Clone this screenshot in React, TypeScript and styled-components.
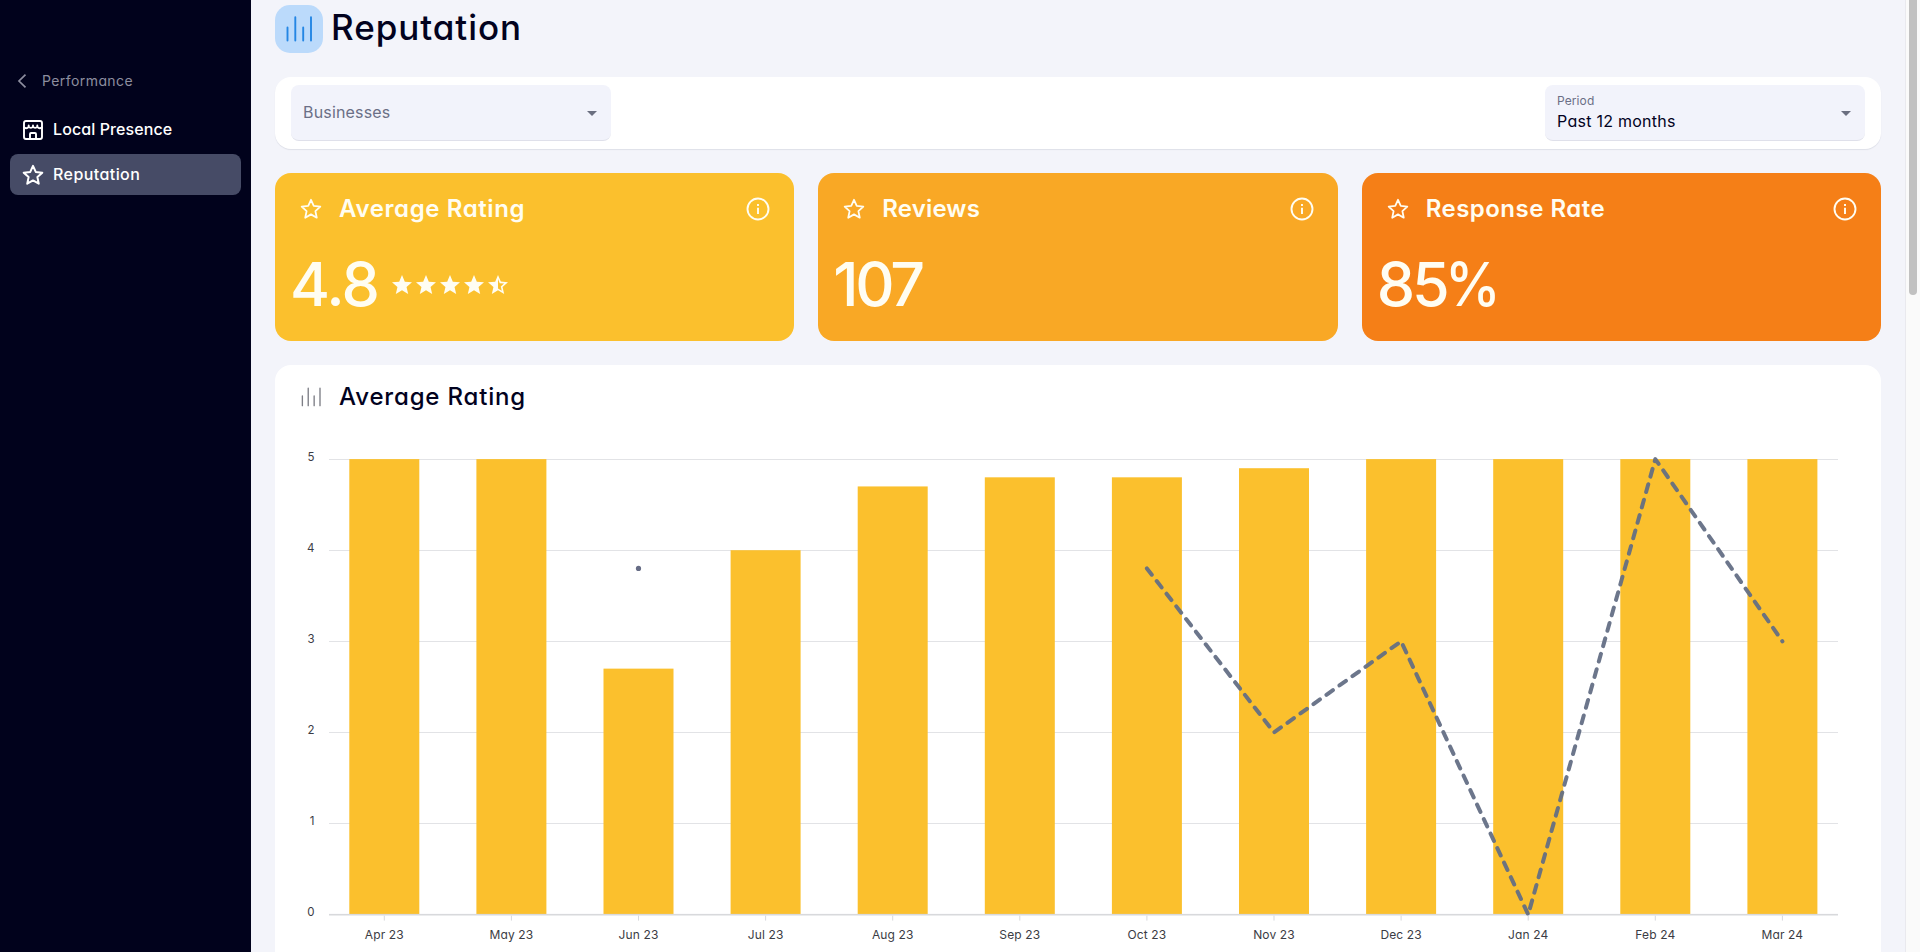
import React from "react";
import styled, { createGlobalStyle } from "styled-components";

const GlobalStyle = createGlobalStyle`
  *, *::before, *::after { box-sizing: border-box; }
  html, body { margin: 0; height: 100%; overflow: hidden; }
  body {
    font-family: Inter, "Open Sans", sans-serif;
    font-feature-settings: "cv11" 1;
    color: #02021e;
    background: #f3f4fa;
  }
  svg { display: block; flex: none; }
`;

const Shell = styled.div`
  display: flex;
  height: 100vh;
  overflow: hidden;
`;

const Sidebar = styled.nav`
  flex: none;
  width: 251px;
  padding: 69px 10px 0;
  background: #01021c;
  color: #fff;
`;

const BackLink = styled.div`
  display: flex;
  align-items: center;
  gap: 12px;
  height: 24px;
  margin-bottom: 16px;
  color: #8d8e9f;
  font-size: 14px;
  letter-spacing: 0.42px;
`;

const NavItem = styled.div<{ $active?: boolean }>`
  display: flex;
  align-items: center;
  gap: 8px;
  height: 41px;
  margin-bottom: 4px;
  padding-left: 11px;
  border-radius: 8px;
  background: ${(p) => (p.$active ? "#464b66" : "transparent")};
  font-size: 16px;
  font-weight: 500;
`;

const NavText = styled.span<{ $spacing?: number }>`
  padding-bottom: 2px;
  letter-spacing: ${(p) => p.$spacing ?? 0}px;
`;

const Main = styled.main`
  flex: 1;
  min-width: 0;
  padding: 5px 24px 0;
  display: flex;
  flex-direction: column;
  gap: 24px;
`;

const PageHeader = styled.header`
  display: flex;
  gap: 8px;
  height: 48px;
`;

const HeaderIcon = styled.div`
  width: 48px;
  height: 48px;
  display: grid;
  place-items: center;
  border-radius: 15px;
  background: #bbdafb;
  color: #2486e4;
`;

const PageTitle = styled.h1`
  margin: 0;
  font-size: 35px;
  line-height: 45px;
  font-weight: 500;
  letter-spacing: 0.95px;
`;

const FilterBar = styled.section`
  flex: none;
  display: flex;
  justify-content: space-between;
  height: 72px;
  padding: 8px 16px;
  border-radius: 16px;
  background: #fff;
  box-shadow: 0 1px 1px rgba(40, 45, 80, 0.1);
`;

const Select = styled.div`
  display: flex;
  align-items: center;
  justify-content: space-between;
  width: 320px;
  height: 56px;
  padding: 0 7px 0 12px;
  border-radius: 8px;
  border-bottom: 1px solid #dfe0ea;
  background: #f2f3fb;
  color: #6b6f86;
  font-size: 16px;
`;

const SelectText = styled.div`
  display: flex;
  flex-direction: column;
`;

const Placeholder = styled.span`
  padding-bottom: 2px;
  letter-spacing: 0.18px;
`;

const SelectLabel = styled.span`
  font-size: 12px;
  line-height: 16px;
  letter-spacing: 0.1px;
`;

const SelectValue = styled.span`
  color: #02021e;
  line-height: 24px;
  letter-spacing: 0.26px;
`;

const CardRow = styled.section`
  flex: none;
  display: grid;
  grid-template-columns: repeat(3, 1fr);
  gap: 24px;
`;

const StatCard = styled.article<{ $color: string }>`
  height: 168px;
  padding: 16px;
  border-radius: 16px;
  background: ${(p) => p.$color};
  color: #fffdf2;
`;

const CardHead = styled.div`
  display: flex;
  align-items: center;
  height: 40px;
  padding: 0 8px;
`;

const CardTitle = styled.h2<{ $spacing: number }>`
  flex: 1;
  margin: 0 0 0 16px;
  font-size: 24px;
  line-height: 40px;
  font-weight: 500;
  letter-spacing: ${(p) => p.$spacing}px;
`;

const StatTitle = styled(CardTitle)`
  font-weight: 600;
`;

const CardBody = styled.div`
  display: flex;
  align-items: center;
  gap: 12px;
  height: 96px;
  padding-top: 16px;
`;

const Figure = styled.span<{ $spacing: number }>`
  margin-left: -1px;
  padding-bottom: 3px;
  font-size: 61px;
  font-weight: 500;
  line-height: 80px;
  letter-spacing: ${(p) => p.$spacing}px;
`;

const Percent = styled.span`
  display: inline-block;
  margin-left: -2px;
  transform: scaleX(0.92);
  transform-origin: left;
`;

const Stars = styled.div`
  display: flex;
`;

const ChartCard = styled.section`
  flex: none;
  height: 640px;
  padding: 12px 24px 0;
  border-radius: 16px;
  background: #fff;
`;

const ChartHead = styled.div`
  display: flex;
  align-items: center;
  height: 40px;
`;

const MutedIcon = styled.span`
  color: #7d7e86;
`;

const Chart = styled.svg`
  margin: 23px 0 0 -24px;
  font-size: 11.5px;
  fill: #3b3c44;
`;

const ScrollTrack = styled.div`
  flex: none;
  width: 15px;
  padding-left: 3px;
  border-left: 1px solid #e9e9ee;
  background: #fafafa;
`;

const ScrollThumb = styled.div`
  width: 8px;
  height: 295px;
  border-radius: 0 0 4px 4px;
  background: #c1c1c1;
`;

const ChevronLeft = () => (
  <svg width="20" height="20" viewBox="0 0 20 20" fill="none" stroke="currentColor" strokeWidth="1.7">
    <path d="M15.500 3.700 9 10l6.500 6.300" />
  </svg>
);

const StoreIcon = () => (
  <svg width="24" height="24" viewBox="0 0 24 24" fill="none" stroke="currentColor" strokeWidth="1.9" strokeLinecap="round" strokeLinejoin="round">
    <rect x="3" y="3" width="18" height="18" rx="2" />
    <path d="M3 9.400c1.800 1.200 3.600.8 4.700-.6 1 1.400 3.300 1.400 4.300 0 1 1.400 3.300 1.400 4.300 0 1.100 1.400 2.900 1.800 4.700.6M7.700 7.400v1.400M12 7.400v1.400M16.300 7.400v1.400M9 21v-5a1 1 0 0 1 1-1h4a1 1 0 0 1 1 1v5" />
  </svg>
);

const StarOutline = ({ weight = 2 }: { weight?: number }) => (
  <svg width="24" height="24" viewBox="0 0 24 24" fill="none" stroke="currentColor" strokeWidth={weight} strokeLinejoin="round">
    <path d="m12 2.800 2.750 6.150 6.550.7-4.900 4.450 1.350 6.600L12 17.400 6.250 20.700 7.600 14.100 2.700 9.650l6.550-.7z" />
  </svg>
);

const InfoIcon = () => (
  <svg width="24" height="24" viewBox="0 0 24 24" fill="none" stroke="currentColor" strokeWidth="1.900">
    <circle cx="12" cy="12" r="10.500" />
    <path d="M12 10.800v6.200M12 7v2" />
  </svg>
);

const StarFull = () => (
  <svg width="24" height="24" viewBox="0 0 24 24" fill="currentColor">
    <path d="M12 17.270 18.180 21l-1.640-7.030L22 9.240l-7.190-.61L12 2 9.190 8.630 2 9.240l5.460 4.730L5.820 21z" />
  </svg>
);

const StarHalf = () => (
  <svg width="24" height="24" viewBox="0 0 24 24" fill="currentColor">
    <path d="M22 9.240l-7.190-.62L12 2 9.190 8.630 2 9.240l5.460 4.730L5.820 21 12 17.270 18.180 21l-1.630-7.030L22 9.240zM12 15.400V6.100l1.710 4.040 4.380.38-3.320 2.880 1 4.280L12 15.400z" />
  </svg>
);

const BarsIcon = ({ size, weight }: { size: number; weight: number }) => (
  <svg width={size} height={size} viewBox="0 0 32 32" fill="none" stroke="currentColor" strokeWidth={weight} strokeLinecap="round">
    <path d="M4.500 14.500v13M12.300 4.300v23.200M20.200 14.500v13M28 4.300v23.200" />
  </svg>
);

const Caret = () => (
  <svg width="24" height="24" viewBox="0 0 24 24" fill="#6b6f80">
    <path d="m7 10 5 5 5-5z" />
  </svg>
);

const months: [string, number, number | null][] = [
  ["Apr 23", 5, null],
  ["May 23", 5, null],
  ["Jun 23", 2.7, 3.8],
  ["Jul 23", 4, null],
  ["Aug 23", 4.7, null],
  ["Sep 23", 4.8, null],
  ["Oct 23", 4.8, 3.8],
  ["Nov 23", 4.9, 2],
  ["Dec 23", 5, 3],
  ["Jan 24", 5, 0],
  ["Feb 24", 5, 5],
  ["Mar 24", 5, 3],
];

const TOP = 19.1;
const UNIT = 91.1;
const xOf = (i: number) => 109.3 + i * 127.1;
const yOf = (v: number) => TOP + (5 - v) * UNIT;

const RatingChart = () => {
  const trend = months
    .map(([, , value], i) => ({ value, i }))
    .filter((p) => p.i > 5 && p.value !== null)
    .map((p) => `${xOf(p.i)},${yOf(p.value as number)}`)
    .join(" ");
  return (
    <Chart width="1606" height="540" viewBox="0 0 1606 540">
      {[1, 2, 3, 4, 5].map((v) => (
        <rect key={v} x="54" y={Math.round(yOf(v) - 0.5)} width="1509" height="1" fill="#e2e3e6" />
      ))}
      {months.map(([name, value], i) => (
        <rect key={name} x={xOf(i) - 35} y={yOf(value)} width="70" height={yOf(0) - yOf(value)} fill="#fbc02d" />
      ))}
      <rect x="54" y={yOf(0) - 0.7} width="1509" height="1.6" fill="#d8d9dc" />
      {[0, 1, 2, 3, 4, 5].map((v) => (
        <text key={v} x="39.5" y={yOf(v) + 1.6} textAnchor="end">{v}</text>
      ))}
      {months.map(([name], i) => (
        <g key={name}>
          <rect x={xOf(i) - 0.5} y={yOf(0) + 1} width="1" height="5" fill="#d8d9dc" />
          <text x={xOf(i)} y="499" textAnchor="middle" fontSize="12" letterSpacing="0.12">{name}</text>
        </g>
      ))}
      <circle cx={xOf(2)} cy={yOf(3.8)} r="2.6" fill="#666c85" />
      <polyline points={trend} fill="none" stroke="#636d84" strokeOpacity="0.94" strokeWidth="4" strokeLinecap="round" strokeLinejoin="round" strokeDasharray="8 8" />
    </Chart>
  );
};

export default function App() {
  return (
    <Shell>
      <GlobalStyle />
      <Sidebar>
        <BackLink>
          <ChevronLeft />
          <NavText $spacing={0.42}>Performance</NavText>
        </BackLink>
        <NavItem>
          <StoreIcon />
          <NavText $spacing={0.1}>Local Presence</NavText>
        </NavItem>
        <NavItem $active>
          <StarOutline />
          <NavText $spacing={0.42}>Reputation</NavText>
        </NavItem>
      </Sidebar>
      <Main>
        <PageHeader>
          <HeaderIcon>
            <BarsIcon size={32} weight={1.9} />
          </HeaderIcon>
          <PageTitle>Reputation</PageTitle>
        </PageHeader>
        <FilterBar>
          <Select>
            <Placeholder>Businesses</Placeholder>
            <Caret />
          </Select>
          <Select>
            <SelectText>
              <SelectLabel>Period</SelectLabel>
              <SelectValue>Past 12 months</SelectValue>
            </SelectText>
            <Caret />
          </Select>
        </FilterBar>
        <CardRow>
          <StatCard $color="#fbc02d">
            <CardHead>
              <StarOutline weight={1.8} />
              <StatTitle $spacing={0.6}>Average Rating</StatTitle>
              <InfoIcon />
            </CardHead>
            <CardBody>
              <Figure $spacing={-1.8}>4.8</Figure>
              <Stars>
                <StarFull />
                <StarFull />
                <StarFull />
                <StarFull />
                <StarHalf />
              </Stars>
            </CardBody>
          </StatCard>
          <StatCard $color="#f9a825">
            <CardHead>
              <StarOutline weight={1.8} />
              <StatTitle $spacing={0.15}>Reviews</StatTitle>
              <InfoIcon />
            </CardHead>
            <CardBody>
              <Figure $spacing={-3.3}>107</Figure>
            </CardBody>
          </StatCard>
          <StatCard $color="#f57f17">
            <CardHead>
              <StarOutline weight={1.8} />
              <StatTitle $spacing={0.48}>Response Rate</StatTitle>
              <InfoIcon />
            </CardHead>
            <CardBody>
              <Figure $spacing={-3}>
                85<Percent>%</Percent>
              </Figure>
            </CardBody>
          </StatCard>
        </CardRow>
        <ChartCard>
          <ChartHead>
            <MutedIcon>
              <BarsIcon size={24} weight={1.8} />
            </MutedIcon>
            <CardTitle $spacing={0.83}>Average Rating</CardTitle>
          </ChartHead>
          <RatingChart />
        </ChartCard>
      </Main>
      <ScrollTrack>
        <ScrollThumb />
      </ScrollTrack>
    </Shell>
  );
}
